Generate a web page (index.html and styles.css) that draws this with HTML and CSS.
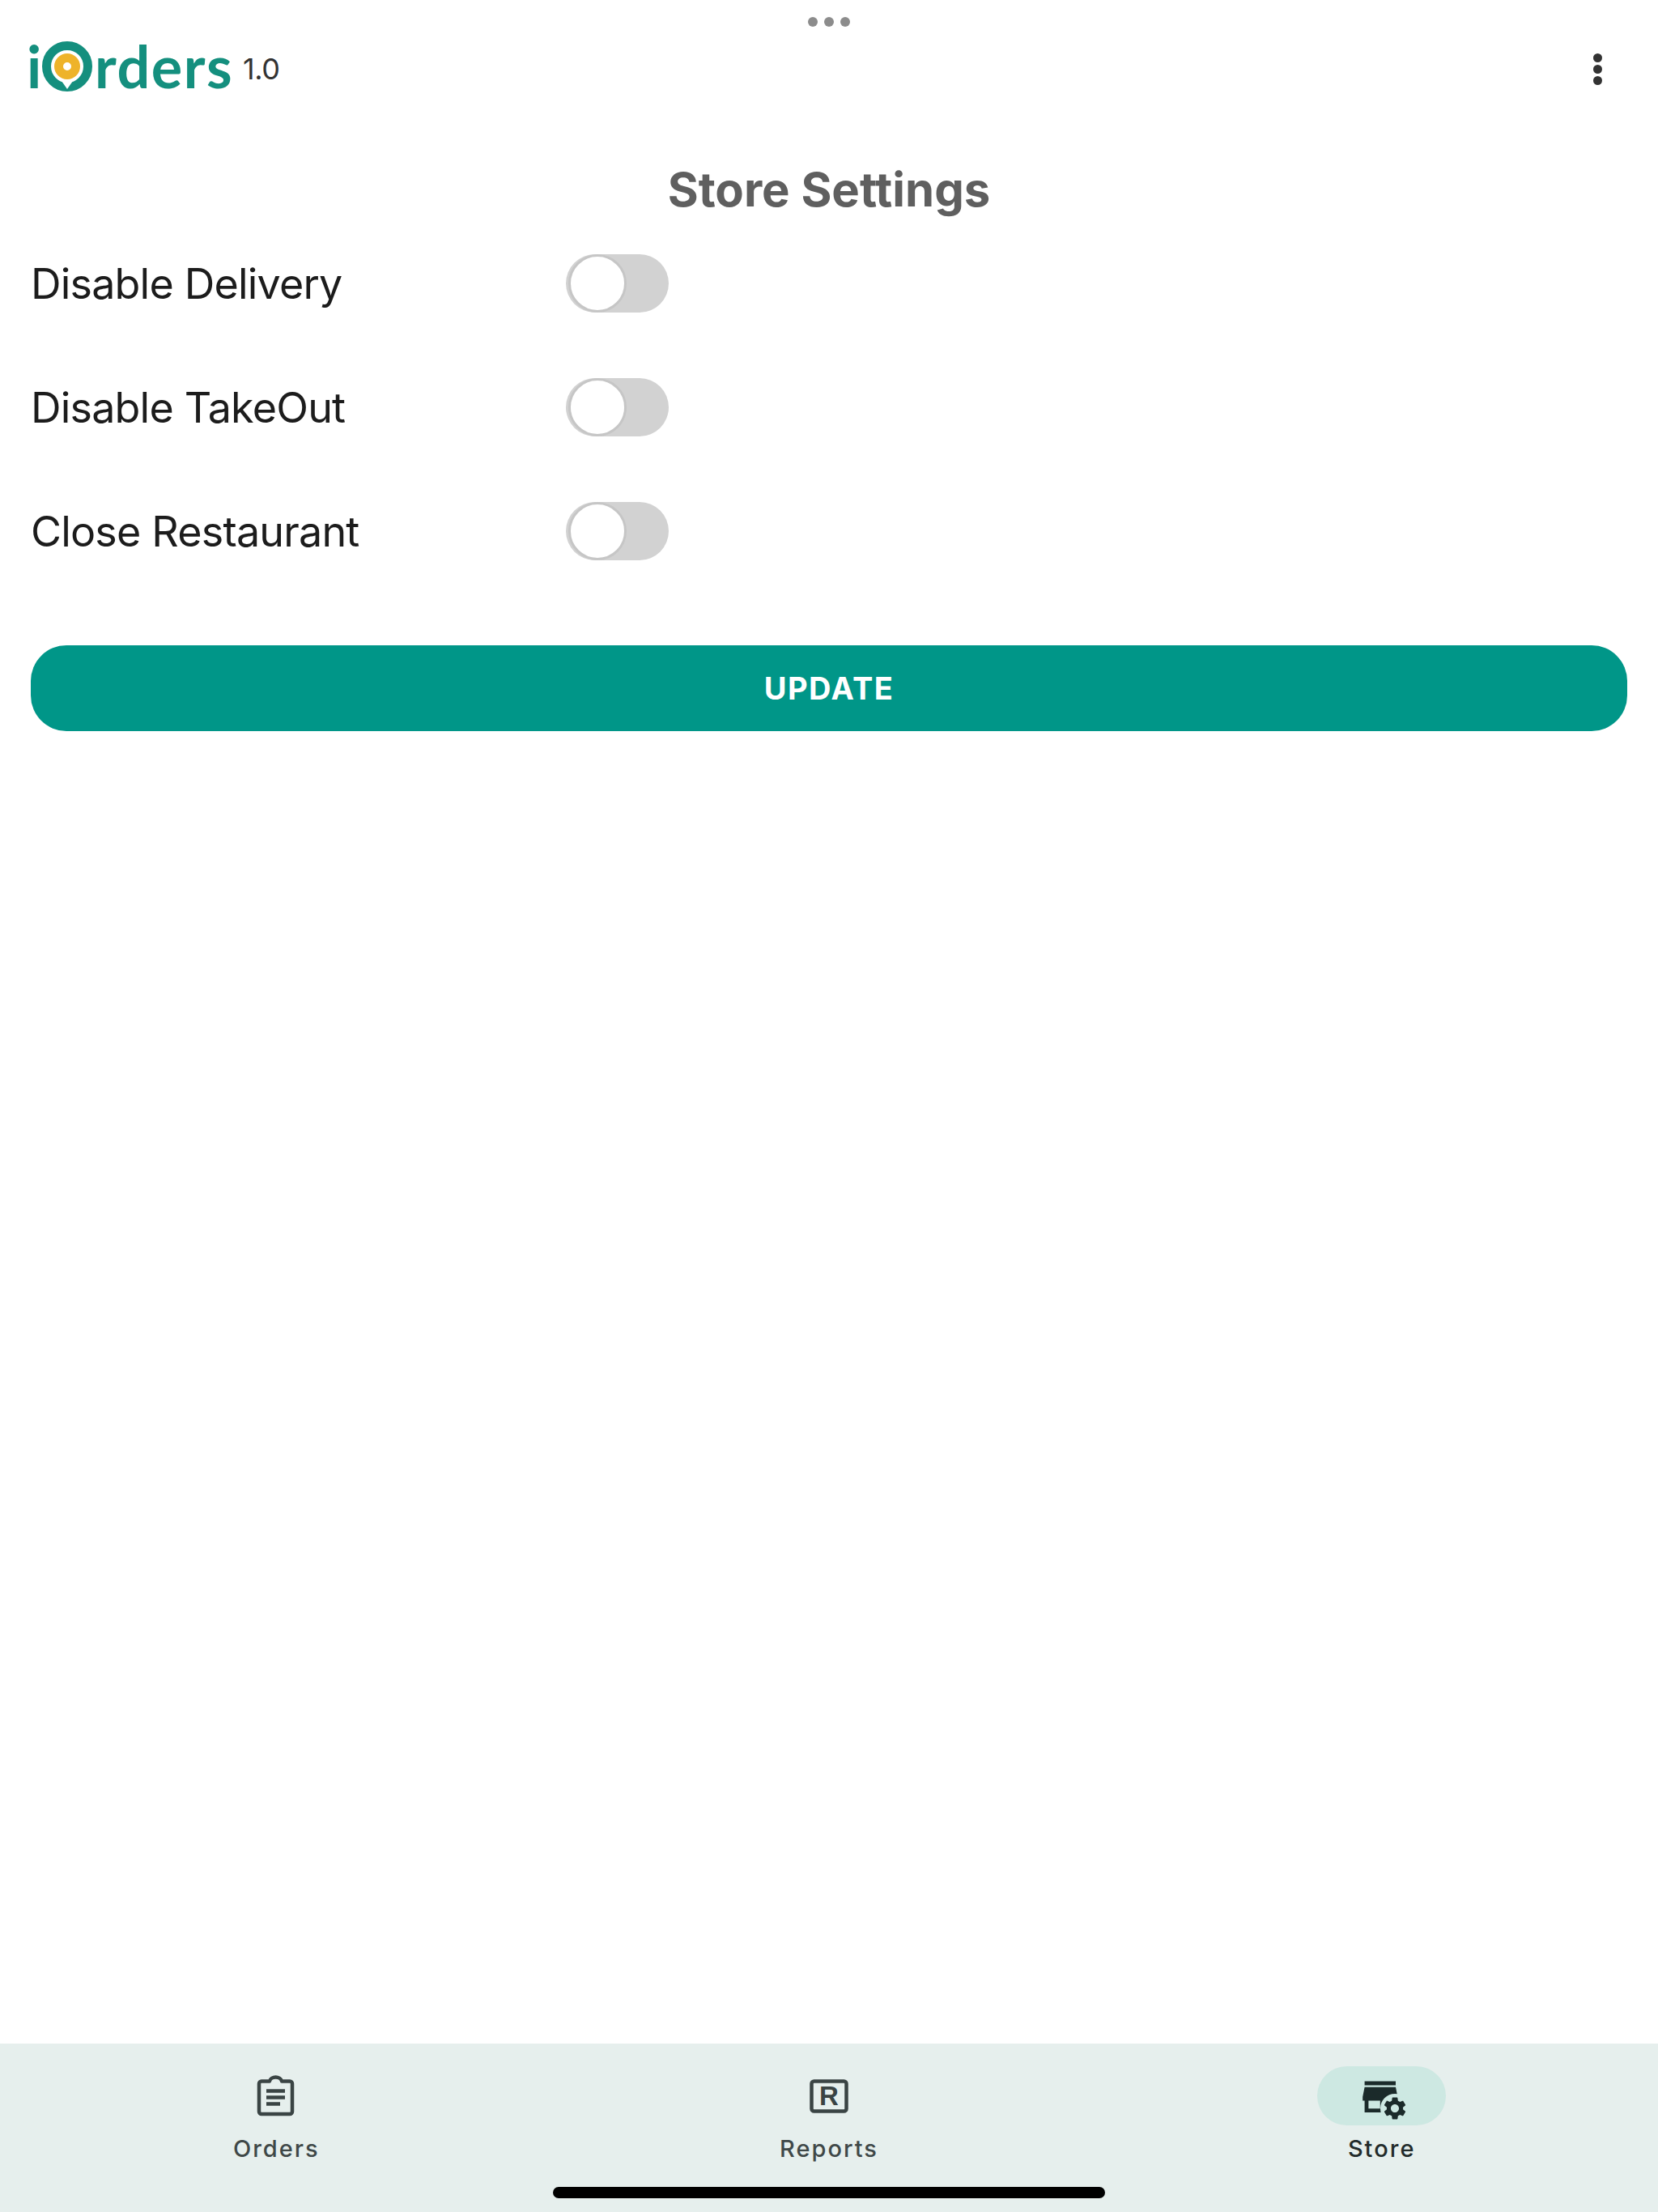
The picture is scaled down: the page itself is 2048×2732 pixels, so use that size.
FILE: index.html
```html
<!DOCTYPE html>
<html lang="en">
<head>
    <meta charset="UTF-8">
    <meta name="viewport" content="width=device-width, initial-scale=1.0">
    <title>iOrders - Store Settings</title>
    <link rel="stylesheet" href="styles.css">
</head>
<body>
    <div class="page">
        <div class="multitask">
            <span></span><span></span><span></span>
        </div>

        <header class="topbar">
            <div class="logo">
                <span class="logo-i">i</span>
                <svg class="logo-o" viewBox="0 0 64 64" role="img" aria-label="O">
                    <circle cx="32" cy="32" r="25.500" fill="none" stroke="#148f7e" stroke-width="11"/>
                    <path d="M25 50H39L32 60Z" fill="#fff"/>
                    <circle cx="32" cy="32" r="10.500" fill="none" stroke="#eeb32a" stroke-width="11"/>
                </svg>
                <span class="logo-text">rders</span>
                <span class="version">1.0</span>
            </div>
            <div class="kebab">
                <span></span><span></span><span></span>
            </div>
        </header>

        <main class="content">
            <h1 class="title">Store Settings</h1>

            <div class="setting-row">
                <span class="setting-label">Disable Delivery</span>
                <span class="toggle"><span class="thumb"></span></span>
            </div>
            <div class="setting-row">
                <span class="setting-label">Disable TakeOut</span>
                <span class="toggle"><span class="thumb"></span></span>
            </div>
            <div class="setting-row">
                <span class="setting-label">Close Restaurant</span>
                <span class="toggle"><span class="thumb"></span></span>
            </div>

            <button class="update-btn">UPDATE</button>
        </main>

        <nav class="bottom-nav">
            <div class="nav-items">
                <div class="nav-item">
                    <div class="nav-icon">
                        <svg width="56" height="56" viewBox="0 0 56 56" fill="none" stroke="#3a4444" stroke-width="4.500">
                            <path d="M10 9.500H20C20.500 6.500 24 4.500 27.500 4.500s7 2 7.500 5H45a3 3 0 0 1 3 3V47a3 3 0 0 1-3 3H10a3 3 0 0 1-3-3V12.500a3 3 0 0 1 3-3Z" stroke-linejoin="round"/>
                            <path d="M16 21.500H39M16 29.500H39M16 37.500H33"/>
                        </svg>
                    </div>
                    <span class="nav-label">Orders</span>
                </div>
                <div class="nav-item">
                    <div class="nav-icon">
                        <svg width="56" height="56" viewBox="0 0 56 56">
                            <rect x="6.500" y="9.500" width="43" height="37" rx="3" fill="none" stroke="#3a4444" stroke-width="4.500"/>
                            <text class="icon-letter" x="28" y="39" text-anchor="middle">R</text>
                        </svg>
                    </div>
                    <span class="nav-label">Reports</span>
                </div>
                <div class="nav-item">
                    <div class="nav-icon active">
                        <svg width="64" height="64" viewBox="0 0 64 64">
                            <g transform="translate(1 4) scale(2.4)">
                                <path fill="#1b2a2a" d="M20 4H4v2h16V4zm1 10v-2l-1-5H4l-1 5v2h1v6h10v-6h4v6h2v-6h1zm-9 4H6v-4h6v4z"/>
                            </g>
                            <circle cx="48" cy="47" r="18" fill="#cde8e2"/>
                            <g transform="translate(31.200 30.200) scale(1.400)">
                                <path fill="#1b2a2a" d="M19.140 12.940c.04-.3.06-.61.06-.94 0-.32-.02-.64-.07-.94l2.030-1.580c.18-.14.23-.41.12-.61l-1.920-3.320c-.12-.22-.37-.29-.59-.22l-2.390.96c-.5-.38-1.030-.7-1.620-.94l-.36-2.540c-.04-.24-.24-.41-.48-.41h-3.840c-.24 0-.43.17-.47.41l-.36 2.540c-.59.24-1.130.57-1.620.94l-2.390-.96c-.22-.08-.47 0-.59.22L2.740 8.870c-.12.21-.08.47.12.61l2.030 1.580c-.05.3-.09.63-.09.94s.02.64.07.94l-2.030 1.580c-.18.14-.23.41-.12.61l1.920 3.320c.12.22.37.29.59.22l2.390-.96c.5.38 1.030.7 1.620.94l.36 2.540c.05.24.24.41.48.41h3.840c.24 0 .44-.17.47-.41l.36-2.540c.59-.24 1.130-.56 1.620-.94l2.390.96c.22.08.47 0 .59-.22l1.920-3.320c.12-.22.07-.47-.12-.61l-2.010-1.580zM12 15.600c-1.980 0-3.600-1.620-3.600-3.600s1.620-3.600 3.600-3.600 3.600 1.620 3.600 3.600-1.620 3.600-3.600 3.600z"/>
                            </g>
                        </svg>
                    </div>
                    <span class="nav-label dark">Store</span>
                </div>
            </div>
            <div class="home-bar"></div>
        </nav>
    </div>
</body>
</html>
```

FILE: styles.css
```css
body {
    margin: 0;
    padding: 0;
    background-color: #fff;
    font-family: Inter, "Liberation Sans", sans-serif;
}
.page {
    display: flex;
    flex-direction: column;
    width: 2048px;
    height: 2732px;
}
.multitask {
    display: flex;
    justify-content: center;
    gap: 8px;
    padding-top: 21px;
}
.multitask span {
    width: 12px;
    height: 12px;
    border-radius: 50%;
    background-color: #8c8c8c;
}
.topbar {
    display: flex;
    justify-content: space-between;
    align-items: center;
    height: 104px;
    padding: 0 69px 0 33px;
}
.logo {
    display: flex;
    align-items: baseline;
    margin-bottom: 8px;
    color: #148f7e;
    font-family: Lato, sans-serif;
    font-size: 72px;
    font-weight: 700;
    line-height: 84px;
}
.logo-i {
    width: 18px;
}
.logo-o {
    align-self: center;
    width: 64px;
    height: 64px;
    margin-top: 2px;
}
.logo-text {
    margin-left: 2px;
    letter-spacing: 1.5px;
}
.version {
    align-self: center;
    margin: 8px 0 0 12px;
    color: #333;
    font-family: Inter, sans-serif;
    font-size: 36px;
    font-weight: 400;
    letter-spacing: -0.5px;
    line-height: 44px;
}
.kebab {
    display: flex;
    flex-direction: column;
    gap: 3px;
}
.kebab span {
    width: 11px;
    height: 11px;
    border-radius: 50%;
    background-color: #333;
}
.content {
    display: flex;
    flex-direction: column;
    padding: 0 38px;
}
.title {
    margin: 65px 0 0;
    color: #5f5f5f;
    font-size: 58px;
    font-weight: 700;
    line-height: 64px;
    text-align: center;
}
.setting-row {
    display: flex;
    align-items: center;
    height: 72px;
    margin-top: 81px;
}
.title + .setting-row {
    margin-top: 48px;
}
.setting-label {
    width: 661px;
    color: #1c1c1c;
    font-size: 52px;
    letter-spacing: -0.8px;
}
.toggle {
    display: flex;
    align-items: center;
    width: 127px;
    height: 72px;
    border-radius: 36px;
    background-color: #d2d2d2;
}
.thumb {
    box-sizing: border-box;
    width: 72px;
    height: 72px;
    margin-left: 3px;
    border: 3px solid #c6c6c6;
    border-radius: 50%;
    background-color: #fff;
}
.update-btn {
    height: 106px;
    margin-top: 105px;
    border: none;
    border-radius: 44px;
    background-color: #009688;
    color: #fff;
    font-family: Inter, sans-serif;
    font-size: 38px;
    font-weight: 700;
    letter-spacing: 1.5px;
}
.bottom-nav {
    margin-top: auto;
    height: 208px;
    background-color: #e6efed;
}
.nav-items {
    display: grid;
    grid-template-columns: repeat(3, 1fr);
    padding-top: 28px;
}
.nav-item {
    display: flex;
    flex-direction: column;
    align-items: center;
}
.nav-icon {
    display: flex;
    justify-content: center;
    align-items: center;
    width: 159px;
    height: 73px;
    border-radius: 37px;
}
.nav-icon.active {
    background-color: #cde8e2;
}
.icon-letter {
    fill: #3a4444;
    font-family: "Liberation Sans", sans-serif;
    font-size: 33px;
    font-weight: 700;
}
.nav-label {
    margin-top: 12px;
    color: #3f4848;
    font-size: 29px;
    font-weight: 500;
    letter-spacing: 2px;
    line-height: 34px;
}
.nav-label.dark {
    color: #222b2b;
}
.home-bar {
    width: 682px;
    height: 14px;
    margin: 30px auto 0;
    border-radius: 7px;
    background-color: #000;
}
```
